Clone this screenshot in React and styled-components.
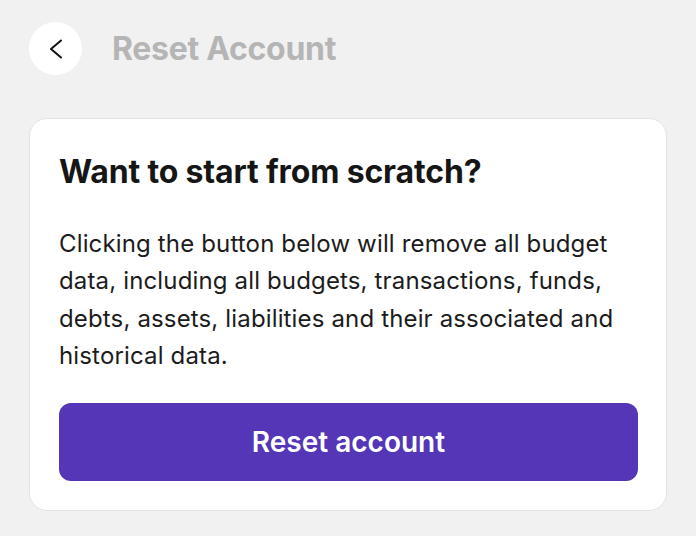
import React from "react";
import styled, { createGlobalStyle } from "styled-components";

const GlobalStyle = createGlobalStyle`
  html, body {
    margin: 0;
    padding: 0;
    background: #f1f1f1;
  }
  body {
    font-family: Inter, "Noto Sans", sans-serif;
    -webkit-font-smoothing: antialiased;
  }
`;

export default function App() {
  return (
    <>
      <GlobalStyle />
      <Page>
        <Header>
          <BackButton aria-label="Back">
            <svg width="24" height="24" viewBox="0 0 24 24" fill="none">
              <path
                d="M17 3.5 L7 12 L17 20.5"
                stroke="#111"
                strokeWidth="2"
                strokeLinecap="round"
                strokeLinejoin="round"
              />
            </svg>
          </BackButton>
          <Title>Reset Account</Title>
        </Header>

        <Card>
          <Heading>Want to start from scratch?</Heading>
          <Body>
            Clicking the button below will remove all budget data, including
            all budgets, transactions, funds, debts, assets, liabilities and
            their associated and historical data.
          </Body>
          <ResetButton type="button">Reset account</ResetButton>
        </Card>
      </Page>
    </>
  );
}

const Page = styled.div`
  width: 696px;
  height: 536px;
  box-sizing: border-box;
  padding: 22px 29px 0 29px;
  display: flex;
  flex-direction: column;
  gap: 43px;
`;

const Header = styled.div`
  display: flex;
  align-items: center;
  gap: 30px;
`;

const BackButton = styled.button`
  width: 53px;
  height: 53px;
  border-radius: 50%;
  border: none;
  background: #ffffff;
  display: flex;
  align-items: center;
  justify-content: center;
  padding: 0;
  cursor: pointer;
`;

const Title = styled.h1`
  margin: 0;
  font-size: 32px;
  line-height: 39px;
  font-weight: 700;
  color: #b5b5b5;
  letter-spacing: -0.3px;
`;

const Card = styled.div`
  background: #ffffff;
  border: 1px solid #e2e2e2;
  border-radius: 18px;
  padding: 33px 28px 29px 29px;
  display: flex;
  flex-direction: column;
`;

const Heading = styled.h2`
  margin: 0;
  font-size: 32px;
  line-height: 39px;
  font-weight: 700;
  color: #161616;
  letter-spacing: -0.15px;
`;

const Body = styled.p`
  margin: 33.5px 0 0 0;
  font-size: 24px;
  line-height: 37.5px;
  font-weight: 400;
  color: #1c1c1c;
  letter-spacing: 0.15px;
`;

const ResetButton = styled.button`
  margin-top: 28.5px;
  height: 78px;
  border: none;
  border-radius: 12px;
  background: #5436b6;
  color: #ffffff;
  font-family: inherit;
  font-size: 28px;
  font-weight: 600;
  cursor: pointer;
`;
